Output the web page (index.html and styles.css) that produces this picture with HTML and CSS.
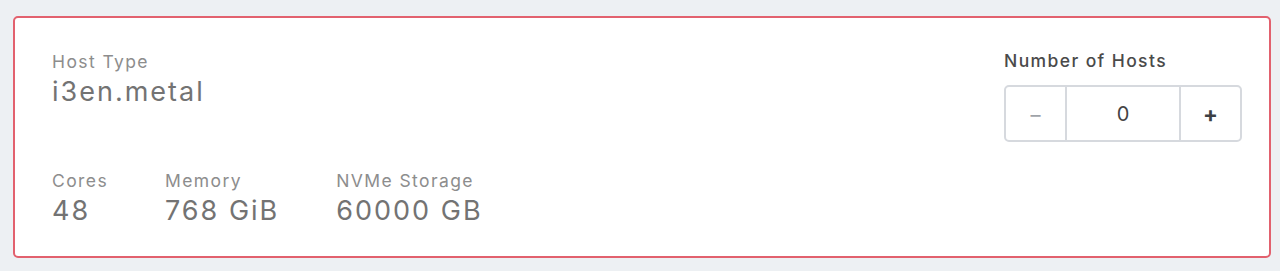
FILE: index.html
```html
<!DOCTYPE html>
<html lang="en">
<head>
    <meta charset="UTF-8">
    <meta name="viewport" content="width=device-width, initial-scale=1.0">
    <title>Host Selection</title>
    <link rel="stylesheet" href="styles.css">
</head>
<body>

<div class="host-card">
    <!-- Host details -->
    <div class="host-info">
        <div class="field">
            <div class="label">Host Type</div>
            <div class="value">i3en.metal</div>
        </div>

        <div class="specs">
            <div class="field">
                <div class="label">Cores</div>
                <div class="value">48</div>
            </div>
            <div class="field">
                <div class="label">Memory</div>
                <div class="value">768 GiB</div>
            </div>
            <div class="field">
                <div class="label">NVMe Storage</div>
                <div class="value">60000 GB</div>
            </div>
        </div>
    </div>

    <!-- Host count -->
    <div class="host-count">
        <div class="count-label">Number of Hosts</div>
        <div class="stepper">
            <button class="step minus" type="button">&minus;</button>
            <div class="count">0</div>
            <button class="step plus" type="button">+</button>
        </div>
    </div>
</div>

</body>
</html>
```

FILE: styles.css
```css
body {
    font-family: "Inter", "Open Sans", sans-serif;
    margin: 0;
    padding: 16px 9px 13px 13px;
    background: #edf0f3;
}

.host-card {
    display: flex;
    justify-content: space-between;
    box-sizing: border-box;
    height: 242px;
    background: white;
    border: 2px solid #e2616e;
    border-radius: 5px;
    padding: 32px 27px 0 37px;
}

.host-info {
    display: flex;
    flex-direction: column;
    gap: 60px;
}

.specs {
    display: flex;
    gap: 57px;
}

.label {
    font-size: 17.5px;
    line-height: 24px;
    letter-spacing: 1.4px;
    color: #8d8d8d;
}

.value {
    font-size: 27px;
    line-height: 35px;
    letter-spacing: 2px;
    color: #737373;
}

.host-count {
    display: flex;
    flex-direction: column;
    gap: 13px;
}

.count-label {
    font-size: 17.5px;
    line-height: 22px;
    letter-spacing: 1.4px;
    color: #4a4a4a;
    font-weight: 500;
}

.stepper {
    display: flex;
    width: 238px;
    height: 57px;
    box-sizing: border-box;
    border: 2px solid #d6d9de;
    border-radius: 5px;
}

.step {
    width: 61px;
    border: none;
    background: none;
    padding: 0;
    font-family: inherit;
    font-size: 22px;
    cursor: pointer;
}

.minus {
    color: #9ea2a8;
    border-right: 2px solid #d6d9de;
}

.plus {
    color: #3c3f44;
    font-weight: bold;
    border-left: 2px solid #d6d9de;
}

.count {
    flex: 1;
    display: flex;
    justify-content: center;
    align-items: center;
    font-size: 20px;
    color: #444;
}
```
